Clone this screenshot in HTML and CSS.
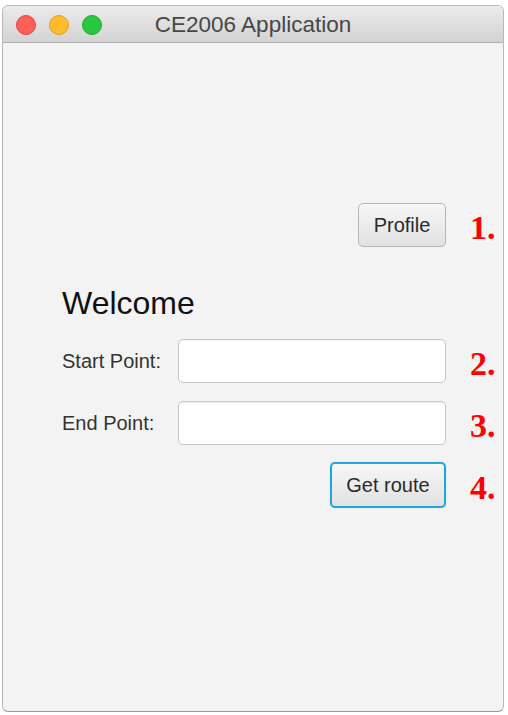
FILE: index.html
```html
<!DOCTYPE html>
<html>
<head>
<meta charset="utf-8">
<title>CE2006 Application</title>
<link rel="stylesheet" href="styles.css">
</head>
<body>
<div class="window">
  <div class="titlebar">
    <div class="lights">
      <span class="light red"></span>
      <span class="light yellow"></span>
      <span class="light green"></span>
    </div>
    <div class="title">CE2006 Application</div>
    <div></div>
  </div>
  <div class="content">
    <div class="row">
      <div class="main end"><button class="btn profile">Profile</button></div>
      <div class="num">1.</div>
    </div>
    <div class="welcome">Welcome</div>
    <div class="row first-field">
      <div class="main"><label class="label">Start Point:</label><input class="field" type="text"></div>
      <div class="num">2.</div>
    </div>
    <div class="row field-row">
      <div class="main"><label class="label">End Point:</label><input class="field" type="text"></div>
      <div class="num">3.</div>
    </div>
    <div class="row route-row">
      <div class="main end"><button class="btn route">Get route</button></div>
      <div class="num">4.</div>
    </div>
  </div>
</div>
</body>
</html>
```
FILE: styles.css
```css
html, body {
  margin: 0;
  padding: 0;
  background: #ffffff;
}
body {
  font-family: "Liberation Sans", Arial, sans-serif;
}
.window {
  margin: 5px 0 0 2px;
  width: 502px;
  height: 707px;
  box-sizing: border-box;
  border: 1px solid #b8b8b8;
  border-bottom-color: #9a9a9a;
  border-radius: 6px;
  overflow: hidden;
  background: #f3f3f3;
  display: flex;
  flex-direction: column;
}
.titlebar {
  height: 37px;
  box-sizing: border-box;
  padding-top: 1px;
  border-bottom: 1px solid #b2b2b2;
  background: linear-gradient(#ebebeb, #d3d3d3);
  display: grid;
  grid-template-columns: 1fr auto 1fr;
  align-items: center;
}
.lights {
  display: flex;
  gap: 13px;
  padding-left: 13px;
}
.light {
  width: 20px;
  height: 20px;
  box-sizing: border-box;
  border-radius: 50%;
  display: block;
}
.red { background: #fc5f57; border: 1px solid #e0443e; }
.yellow { background: #fdbc2e; border: 1px solid #dea123; }
.green { background: #29c740; border: 1px solid #1eaa2f; }
.title {
  font-size: 22.5px;
  color: #474747;
}
.content {
  padding: 160px 0 0 59px;
  display: flex;
  flex-direction: column;
}
.row {
  display: flex;
  align-items: center;
  height: 44px;
}
.main {
  width: 384px;
  display: flex;
  align-items: center;
}
.main.end {
  justify-content: flex-end;
}
.num {
  margin-left: 24px;
  padding-top: 5px;
  font-family: "Liberation Serif", "Times New Roman", serif;
  font-weight: bold;
  font-size: 34px;
  line-height: 34px;
  color: #ff0000;
}
.welcome {
  margin-top: 38px;
  font-size: 32px;
  line-height: 37px;
  color: #111111;
}
.first-field {
  margin-top: 17px;
}
.field-row {
  margin-top: 18px;
}
.route-row {
  margin-top: 17px;
  height: 46px;
}
.label {
  width: 116px;
  font-size: 20px;
  color: #333333;
}
.field {
  width: 268px;
  height: 44px;
  box-sizing: border-box;
  border: 1px solid #c6c6c6;
  border-radius: 5px;
  background: #ffffff;
  box-shadow: inset 0 1px 1px rgba(0, 0, 0, 0.06);
  margin: 0;
  padding: 0 8px;
  font-family: inherit;
  font-size: 20px;
}
.btn {
  margin: 0;
  padding: 0;
  box-sizing: border-box;
  border-radius: 5px;
  background: linear-gradient(#f7f7f7, #e1e1e1);
  font-family: "Liberation Sans", Arial, sans-serif;
  font-size: 20px;
  color: #2a2a2a;
}
.profile {
  width: 88px;
  height: 44px;
  border: 1px solid #b7b7b7;
}
.route {
  width: 116px;
  height: 46px;
  border: 2px solid #1fa6da;
  box-shadow: 0 0 1px rgba(31, 166, 218, 0.6);
}
```
